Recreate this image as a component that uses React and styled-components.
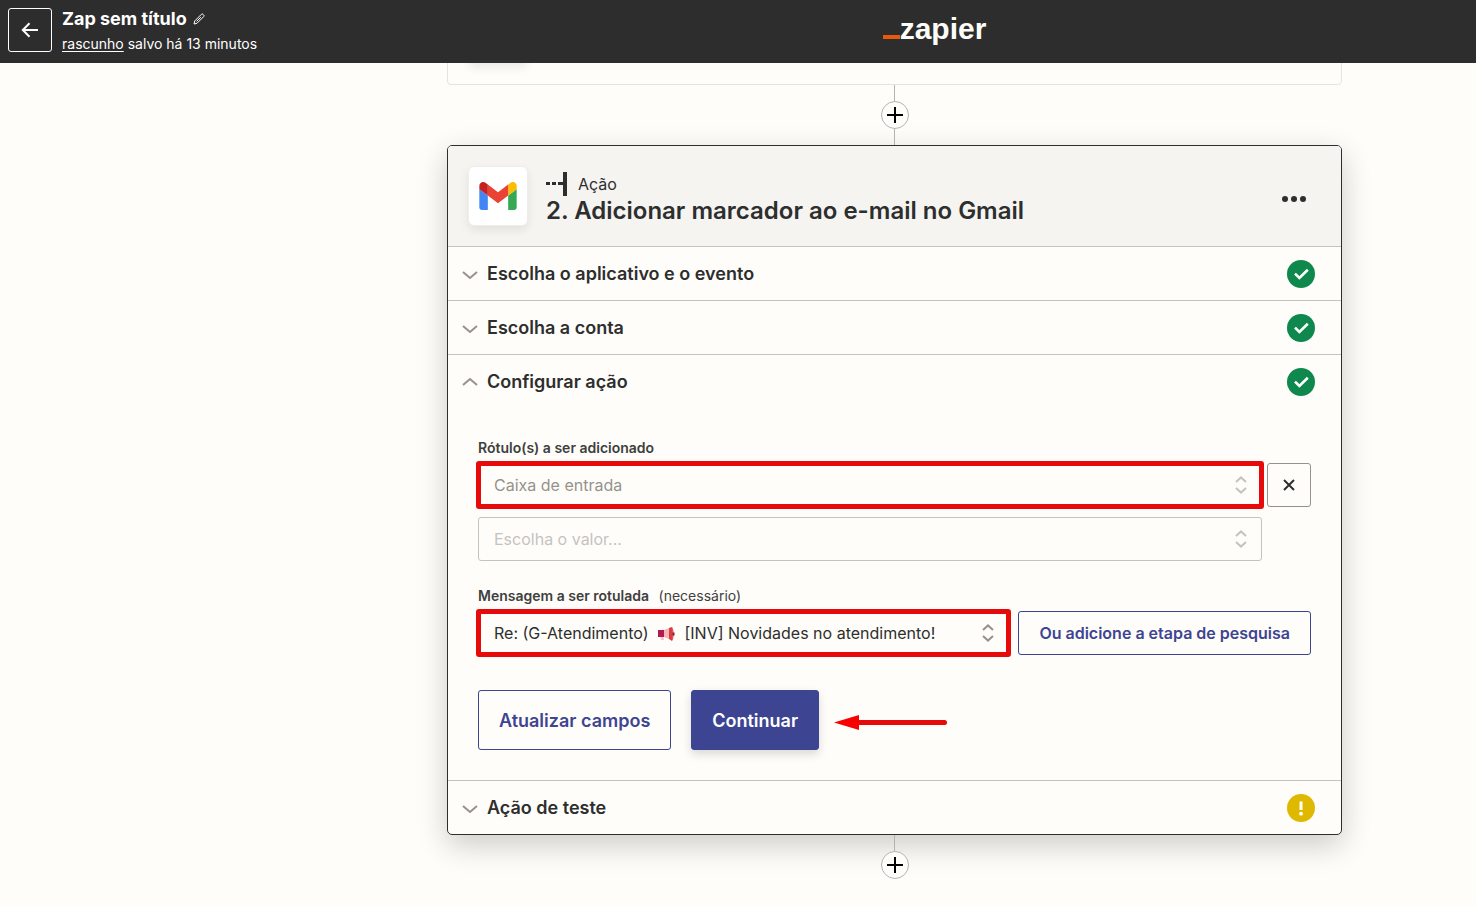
import React from 'react';
import styled, { createGlobalStyle } from 'styled-components';

const colors = {
  black: '#2d2e2e',
  page: '#fffdf9',
  panel: '#f5f4f1',
  line: '#c4c3c0',
  lightLine: '#e4e3e0',
  gray: '#95928e',
  label: '#403f3e',
  lightGray: '#c5c3c0',
  indigo: '#3d4592',
  orange: '#e8590c',
  green: '#0f884e',
  yellow: '#dfb900',
  red: '#e60a0a',
};

const BackIcon = () => (
  <svg width="18" height="16" viewBox="0 0 18 16" fill="none" stroke="#fff" strokeWidth="2">
    <path d="M17 8H2M8.5 1.2L1.8 8l6.7 6.8" />
  </svg>
);

const PencilIcon = () => (
  <svg width="12" height="12" viewBox="0 0 12 12" fill="none" stroke="#fff" strokeWidth="1">
    <path d="M1 11l.7-3L8.4 1.3a1.1 1.1 0 0 1 1.6 0l.7.7a1.1 1.1 0 0 1 0 1.6L4 10.3zM3.6 8.4l4.200-4.200" />
  </svg>
);

const PlusIcon = () => (
  <svg width="16" height="16" viewBox="0 0 16 16" stroke="#000" strokeWidth="2">
    <path d="M0 8h16M8 0v16" />
  </svg>
);

const GmailIcon = () => (
  <svg width="38" height="28" viewBox="52 42 88 66">
    <path fill="#4285f4" d="M58 108h14V74L52 59v43c0 3.32 2.69 6 6 6" />
    <path fill="#34a853" d="M120 108h14c3.32 0 6-2.69 6-6V59l-20 15" />
    <path fill="#fbbc04" d="M120 48v26l20-15v-8c0-7.42-8.47-11.65-14.4-7.2" />
    <path fill="#ea4335" d="M72 74V48l24 18 24-18v26L96 92" />
    <path fill="#c5221f" d="M52 51v8l20 15V48l-5.6-4.2c-5.94-4.45-14.4-.22-14.4 7.2" />
  </svg>
);

const ActionIcon = () => (
  <svg width="22" height="24" viewBox="0 0 22 24" fill={colors.black}>
    <path d="M0 10h4v3H0zM6 10h4v3H6zM12 10h5v3h-5zM17 0h4v24h-4z" />
  </svg>
);

const DotsIcon = () => (
  <svg width="24" height="6" viewBox="0 0 24 6" fill={colors.black}>
    <circle cx="3" cy="3" r="3" />
    <circle cx="12" cy="3" r="3" />
    <circle cx="21" cy="3" r="3" />
  </svg>
);

const ChevronIcon = ({ open }) => (
  <svg width="16" height="16" viewBox="0 0 16 16" fill="none" stroke={colors.gray} strokeWidth="2">
    <path d={open ? 'M1 11l7-6 7 6' : 'M1 6l7 6 7-6'} />
  </svg>
);

const SortIcon = () => (
  <svg width="12" height="18" viewBox="0 0 12 18" fill="none" stroke="currentColor" strokeWidth="2">
    <path d="M1 6l5-4.6L11 6M1 12l5 4.6L11 12" />
  </svg>
);

const CloseIcon = () => (
  <svg width="12" height="12" viewBox="0 0 12 12" stroke={colors.black} strokeWidth="2">
    <path d="M1 1l10 10M11 1L1 11" />
  </svg>
);

const CheckIcon = () => (
  <svg width="28" height="28" viewBox="0 0 28 28" fill="none">
    <circle cx="14" cy="14" r="14" fill={colors.green} />
    <path d="M8 13.6l4.4 4.4 8.4-8.2" stroke="#fff" strokeWidth="2.6" />
  </svg>
);

const WarningIcon = () => (
  <svg width="28" height="28" viewBox="0 0 28 28">
    <circle cx="14" cy="14" r="14" fill={colors.yellow} />
    <path d="M12.5 7.5h3v8.5h-3z" fill="#fff" />
    <circle cx="14" cy="19.7" r="1.9" fill="#fff" />
  </svg>
);

const MegaphoneIcon = () => (
  <svg width="17" height="14" viewBox="0 0 17 14">
    <path fill="#f3c3cf" d="M2 8h3l1 5H3z" />
    <path fill="#b5174f" d="M0 3h6v7H0z" />
    <path fill="#f2b5b8" d="M6 3l5-2v11L6 10z" />
    <path fill="#dd3b42" d="M11 1l3-1v14l-3-2z" />
    <path fill="#e2565a" d="M14 0c1 1 1.600 3 1.600 7s-.6 6-1.600 7z" />
    <path fill="#7d1a2c" d="M14.500 5.500h2v3h-2z" />
  </svg>
);

const ArrowIcon = () => (
  <svg width="114" height="20" viewBox="0 0 114 20">
    <path d="M24 12.500h86.500" stroke={colors.red} strokeWidth="5" strokeLinecap="round" />
    <path d="M0 12.500L25 5v15z" fill="#f80000" />
  </svg>
);

const SelectField = ({ children, tone, arrows, marked, ...rest }) => (
  <SelectWrap>
    <Select $tone={tone} $marked={marked} {...rest}>
      {children}
    </Select>
    <SelectArrows $tone={arrows}>
      <SortIcon />
    </SelectArrows>
  </SelectWrap>
);

const Step = ({ title, open, status }) => (
  <StepRow type="button" aria-expanded={!!open}>
    <ChevronIcon open={open} />
    <StepTitle>{title}</StepTitle>
    {status === 'warning' ? <WarningIcon /> : <CheckIcon />}
  </StepRow>
);

const AddStep = ({ last }) => (
  <Connector>
    <ConnectorLine />
    <AddButton type="button" aria-label="Adicionar etapa">
      <PlusIcon />
    </AddButton>
    {!last && <ConnectorLine />}
  </Connector>
);

const App = () => {
  return (
    <>
      <GlobalStyle />
      <TopBar>
        <TopLeft>
          <BackButton type="button" aria-label="Voltar">
            <BackIcon />
          </BackButton>
          <div>
            <ZapName>
              Zap sem título <PencilIcon />
            </ZapName>
            <ZapStatus>
              <a href="#rascunho">rascunho</a> salvo há 13 minutos
            </ZapStatus>
          </div>
        </TopLeft>
        <Brand href="#inicio">
          <BrandDash />
          zapier
        </Brand>
      </TopBar>

      <Editor>
        <ScrolledPast>
          <PreviousCard>
            <AppTile />
          </PreviousCard>
        </ScrolledPast>
        <AddStep />

        <Card>
          <CardHeader>
            <AppTile>
              <GmailIcon />
            </AppTile>
            <CardHeading>
              <CardKind>
                <ActionIcon />
                Ação
              </CardKind>
              <CardTitle>2. Adicionar marcador ao e-mail no Gmail</CardTitle>
            </CardHeading>
            <MenuButton type="button" aria-label="Mais opções">
              <DotsIcon />
            </MenuButton>
          </CardHeader>

          <Step title="Escolha o aplicativo e o evento" />
          <Divider />
          <Step title="Escolha a conta" />
          <Divider />
          <Step title="Configurar ação" open />

          <Form onSubmit={(e) => e.preventDefault()}>
            <Label htmlFor="rotulo">Rótulo(s) a ser adicionado</Label>
            <LabelGrid>
              <SelectField id="rotulo" tone={colors.gray} arrows={colors.lightGray} marked>
                <option>Caixa de entrada</option>
              </SelectField>
              <RemoveButton type="button" aria-label="Remover">
                <CloseIcon />
              </RemoveButton>
              <SelectField
                aria-label="Outro rótulo"
                tone={colors.lightGray}
                arrows={colors.lightGray}
              >
                <option>Escolha o valor...</option>
              </SelectField>
            </LabelGrid>

            <Label htmlFor="mensagem">
              Mensagem a ser rotulada <Required>(necessário)</Required>
            </Label>
            <MessageRow>
              <MessageSelect>
                <SelectField id="mensagem" tone={colors.black} arrows={colors.gray} marked>
                  <option>
                    {`Re: (G-Atendimento)${'\u00a0'.repeat(8)}[INV] Novidades no atendimento!`}
                  </option>
                </SelectField>
                <SubjectIcon>
                  <MegaphoneIcon />
                </SubjectIcon>
              </MessageSelect>
              <OutlineButton type="button">Ou adicione a etapa de pesquisa</OutlineButton>
            </MessageRow>

            <Actions>
              <OutlineButton type="button" $large>
                Atualizar campos
              </OutlineButton>
              <PrimaryButton type="submit">Continuar</PrimaryButton>
              <ArrowIcon />
            </Actions>
          </Form>

          <Divider />
          <Step title="Ação de teste" status="warning" />
        </Card>
        <AddStep last />
      </Editor>
    </>
  );
};

const GlobalStyle = createGlobalStyle`
  * {
    box-sizing: border-box;
  }

  body {
    margin: 0;
    background: ${colors.page};
    color: ${colors.black};
    font-family: Inter, "Liberation Sans", sans-serif;
    font-size: 16px;
  }

  button, select {
    font-family: inherit;
    cursor: pointer;
  }

  svg {
    display: block;
    flex-shrink: 0;
  }
`;

const TopBar = styled.header`
  display: grid;
  grid-template-columns: 385px 1fr;
  min-height: 63px;
  padding: 8px 0 8px 8px;
  background: #2d2d2d;
  color: #fff;
`;

const TopLeft = styled.div`
  display: flex;
  align-items: flex-start;
  gap: 10px;
`;

const BackButton = styled.button`
  display: flex;
  justify-content: center;
  align-items: center;
  width: 44px;
  height: 44px;
  padding: 0;
  border: 1px solid #fff;
  border-radius: 3px;
  background: none;
`;

const ZapName = styled.h1`
  display: flex;
  align-items: center;
  gap: 6px;
  margin: 0 0 4px;
  font-size: 18px;
  font-weight: 700;
  line-height: 22px;
`;

const ZapStatus = styled.p`
  margin: 0;
  font-size: 14px;
  line-height: 20px;

  a {
    color: inherit;
    text-underline-offset: 2px;
  }
`;

const Brand = styled.a`
  display: flex;
  justify-self: center;
  align-items: flex-end;
  height: 42px;
  color: ${colors.page};
  font-family: "Liberation Sans", Arial, sans-serif;
  font-size: 30px;
  font-weight: 700;
  line-height: 42px;
  text-decoration: none;
`;

const BrandDash = styled.span`
  width: 17px;
  height: 4px;
  margin-bottom: 11px;
  background: ${colors.orange};
`;

const Editor = styled.main`
  width: calc(100% - 313px);
  max-width: 1208px;
  margin-left: 313px;
  padding: 0 134px 27px;
`;

const ScrolledPast = styled.div`
  display: flex;
  align-items: flex-end;
  height: 22px;
  overflow: hidden;
`;

const PreviousCard = styled.section`
  width: 100%;
  padding: 20px;
  border: 1px solid ${colors.lightLine};
  border-radius: 4px;
`;

const Connector = styled.div`
  display: flex;
  flex-direction: column;
  align-items: center;
`;

const ConnectorLine = styled.span`
  width: 1px;
  height: 16px;
  background: #b5b3b0;
`;

const AddButton = styled.button`
  display: flex;
  justify-content: center;
  align-items: center;
  width: 28px;
  height: 28px;
  padding: 0;
  border: 1px solid #b5b3b0;
  border-radius: 50%;
  background: ${colors.page};
`;

const Card = styled.section`
  border: 1px solid ${colors.black};
  border-radius: 5px;
  background: ${colors.page};
  box-shadow: 0 10px 30px rgba(0, 0, 0, 0.2);
`;

const CardHeader = styled.header`
  display: flex;
  align-items: center;
  padding: 20px;
  border-bottom: 1px solid ${colors.line};
  border-radius: 4px 4px 0 0;
  background: ${colors.panel};
`;

const AppTile = styled.div`
  display: flex;
  justify-content: center;
  align-items: center;
  width: 60px;
  height: 60px;
  border: 1px solid #eeedea;
  border-radius: 6px;
  background: #fff;
  box-shadow: 0 4px 10px rgba(0, 0, 0, 0.08);
`;

const CardHeading = styled.div`
  flex: 1;
  margin-left: 18px;
  padding-top: 6px;
`;

const CardKind = styled.div`
  display: flex;
  align-items: center;
  gap: 10px;
  line-height: 24px;
`;

const CardTitle = styled.h2`
  margin: 0;
  font-size: 24px;
  font-weight: 600;
  line-height: 30px;
`;

const MenuButton = styled.button`
  padding: 21px 15px 15px;
  border: 0;
  background: none;
`;

const StepRow = styled.button`
  display: flex;
  align-items: center;
  gap: 9px;
  width: 100%;
  height: 53px;
  padding: 0 26px 0 14px;
  border: 0;
  background: none;
  color: inherit;
  text-align: left;
`;

const StepTitle = styled.span`
  flex: 1;
  font-size: 18px;
  font-weight: 600;
`;

const Divider = styled.hr`
  height: 1px;
  margin: 0;
  border: 0;
  background: ${colors.line};
`;

const Form = styled.form`
  padding: 30px;
`;

const Label = styled.label`
  display: block;
  margin-bottom: 5px;
  color: ${colors.label};
  font-size: 14px;
  font-weight: 600;
  line-height: 20px;
`;

const Required = styled.span`
  margin-left: 6px;
  font-weight: 400;
`;

const LabelGrid = styled.div`
  display: grid;
  grid-template-columns: 1fr 44px;
  gap: 10px 5px;
  margin-bottom: 25px;
`;

const SelectWrap = styled.div`
  position: relative;
`;

const Select = styled.select`
  appearance: none;
  display: block;
  width: 100%;
  height: 44px;
  padding: 0 34px 0 15px;
  border: 1px solid ${colors.lightGray};
  border-radius: ${(props) => (props.$marked ? '1px' : '3px')};
  outline: ${(props) => (props.$marked ? `5px solid ${colors.red}` : 'none')};
  outline-offset: -3px;
  background: ${colors.page};
  color: ${(props) => props.$tone};
  font-size: 16px;
`;

const SelectArrows = styled.span`
  position: absolute;
  top: 13px;
  right: 15px;
  color: ${(props) => props.$tone};
  pointer-events: none;
`;

const RemoveButton = styled.button`
  display: flex;
  justify-content: center;
  align-items: center;
  padding: 0;
  border: 1px solid ${colors.gray};
  border-radius: 3px;
  background: none;
`;

const MessageRow = styled.div`
  display: grid;
  grid-template-columns: 1fr auto;
  gap: 9px;
`;

const MessageSelect = styled.div`
  position: relative;
`;

const SubjectIcon = styled.span`
  position: absolute;
  top: 16px;
  left: 180px;
  pointer-events: none;
`;

const OutlineButton = styled.button`
  height: ${(props) => (props.$large ? '60px' : '44px')};
  padding: 0 20px;
  border: 1px solid ${colors.indigo};
  border-radius: 3px;
  background: none;
  color: ${colors.indigo};
  font-size: ${(props) => (props.$large ? '18px' : '16px')};
  font-weight: 600;
`;

const PrimaryButton = styled(OutlineButton).attrs({ $large: true })`
  margin: 0 15px 0 20px;
  background: ${colors.indigo};
  color: #fff;
  box-shadow: 0 4px 10px rgba(0, 0, 0, 0.15);
`;

const Actions = styled.div`
  display: flex;
  align-items: center;
  margin-top: 35px;
`;

export default App;
